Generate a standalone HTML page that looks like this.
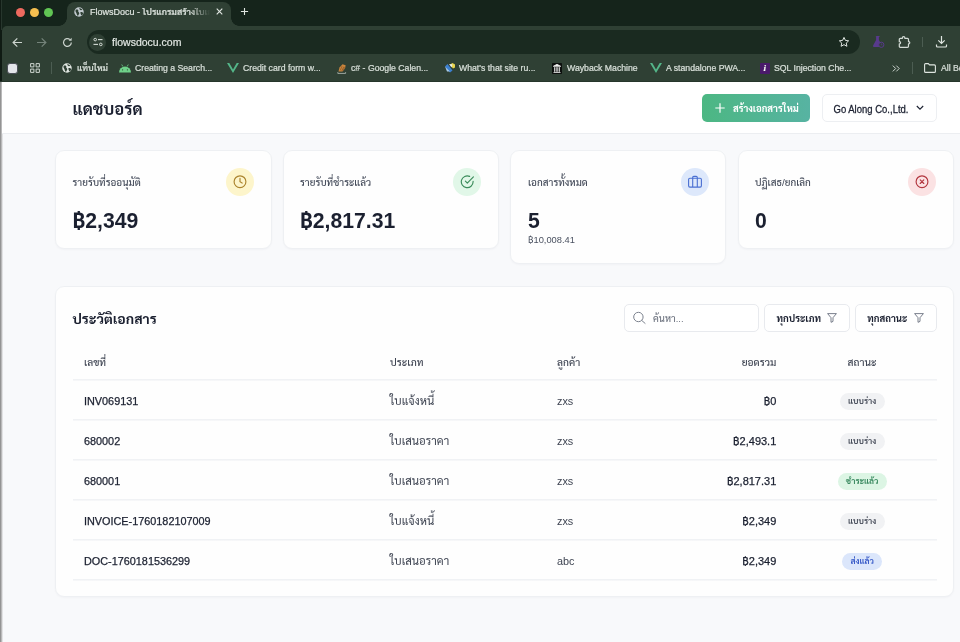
<!DOCTYPE html>
<html lang="th">
<head>
<meta charset="utf-8">
<title>FlowsDocu - โปรแกรมสร้างใบเสนอราคา</title>
<style>
*{box-sizing:border-box;margin:0;padding:0}
html,body{width:960px;height:642px;overflow:hidden;background:#f8f9fb}
body{position:relative;font-family:"Liberation Sans","Sarabun","Noto Sans Thai","Loma",sans-serif;color:#1f2430;-webkit-font-smoothing:antialiased}
#root{position:absolute;left:0;top:0;width:960px;height:642px;will-change:transform}
.abs{position:absolute}
.t{position:absolute;white-space:nowrap;line-height:1}
/* ---------- browser chrome ---------- */
#chrome{position:absolute;left:0;top:0;width:960px;height:82px;background:#0f1a13;overflow:hidden}
#toolbar{position:absolute;left:1.6px;top:26px;width:959px;height:56px;background:#2f4034;border-top-left-radius:5px}
#tabstrip{position:absolute;left:0;top:0;width:960px;height:30px;background:linear-gradient(90deg,#101b14 0,#101b14 .9px,#27362d 1px,#27362d 1.7px,#15241b 2.2px)}
#tab{position:absolute;left:67px;top:2px;width:164px;height:24px;background:#2f4034;border-radius:8px 8px 0 0}
#omni{position:absolute;left:87px;top:30px;width:773px;height:24px;background:#1a2a20;border-radius:12px}
.ct{position:absolute;white-space:nowrap;line-height:1;color:#d9e0da;font-size:8.7px;font-weight:500;-webkit-text-stroke:.2px #d9e0da}
#edgeL1{position:absolute;left:0;top:0;width:0;height:0}
#edgeL2{position:absolute;left:0;top:82px;width:3px;height:560px;background:linear-gradient(90deg,#858585 0,#a3a3a3 1px,#cfcfd0 2px,#f4f5f7 3px)}
/* ---------- page ---------- */
#hdr{position:absolute;left:2px;top:82px;width:958px;height:52px;background:#fff;border-bottom:1px solid #eceef1}
.card{position:absolute;background:#fefefe;border:1px solid #eef0f3;border-radius:9px;box-shadow:0 1px 2px rgba(20,30,50,.03)}
.lbl{font-size:9.9px;color:#434a59;font-weight:500}
.num{font-size:21.2px;font-weight:700;color:#1b2030}
.ic{position:absolute;width:28px;height:28px;border-radius:50%}
.hl{position:absolute;left:72.8px;width:864.2px;height:2px;background:linear-gradient(to bottom,rgba(235,237,241,.72) 50%,rgba(235,237,241,.42) 50%)}
.th{font-size:10.2px;color:#3e4452;line-height:14px;font-weight:500}
.id{font-size:10.85px;color:#1b2030;line-height:14px;-webkit-text-stroke:.25px #1b2030}
.cell{font-size:11.4px;color:#3e4452;line-height:16px}
.cell2{font-size:10.85px;color:#3e4452;line-height:14px}
.amt{font-size:11px;color:#1b2030;text-align:right;line-height:14px;-webkit-text-stroke:.25px #1b2030}
.pill{position:absolute;height:17px;border-radius:8.5px;font-size:8.4px;font-weight:600;line-height:17px;text-align:center;white-space:nowrap}
.draft{background:#f1f2f4;color:#3e4452}
.paid{background:#dcf5e4;color:#2f8257}
.sent{background:#dbe6fb;color:#2c50c4}
.btn{position:absolute;background:#fff;border:1px solid #e8eaee;border-radius:5px}
</style>
</head>
<body>
<div id="root">
<!-- ================= BROWSER CHROME ================= -->
<div id="chrome">
  <div id="tabstrip"></div>
  <div id="toolbar"></div>
  <!-- traffic lights -->
  <div class="abs" style="left:16px;top:8px;width:9px;height:9px;border-radius:50%;background:#ee6a5f"></div>
  <div class="abs" style="left:30px;top:8px;width:9px;height:9px;border-radius:50%;background:#f5bf4f"></div>
  <div class="abs" style="left:44px;top:8px;width:9px;height:9px;border-radius:50%;background:#61c554"></div>
  <!-- active tab -->
  <div id="tab"></div>
  <div class="abs" style="left:59px;top:18px;width:8px;height:8px;background:radial-gradient(circle at 0 0,transparent 7.5px,#2f4034 8px)"></div>
  <div class="abs" style="left:231px;top:18px;width:8px;height:8px;background:radial-gradient(circle at 100% 0,transparent 7.5px,#2f4034 8px)"></div>
  <svg class="abs" style="left:73.5px;top:7px" width="10" height="10" viewBox="0 0 20 20"><circle cx="10" cy="10" r="9.5" fill="#c3cbd0"/><path d="M3.5 5.5C6.5 4 9.5 5.5 8.5 8 7.5 10 10.5 10 10.5 12.5 10.5 14.5 8.5 15.5 8 18 5.5 16.5 5.5 13 4.5 11.5 3 9.5 2.5 7.5 3.5 5.5Z" fill="#2f4034"/><path d="M11.5 1.5C12.5 3.5 15 3.5 16.5 5 15 7 12.5 6.5 11.5 5 10.5 3.5 10.5 2.5 11.5 1.5Z" fill="#2f4034"/><path d="M13 10C15 9.5 17.5 10.5 18.8 12 18 14.5 16 16.5 14 17 14.5 14.5 12 12.5 13 10Z" fill="#2f4034"/></svg>
  <div class="ct" style="left:90px;top:7.5px;width:120px;overflow:hidden;font-size:9px;color:#e3e8e4;-webkit-mask-image:linear-gradient(90deg,#000 100px,transparent 120px);mask-image:linear-gradient(90deg,#000 100px,transparent 120px)">FlowsDocu - โปรแกรมสร้างใบเสนอราคา</div>
  <svg class="abs" style="left:215.7px;top:8.3px" width="7" height="7" viewBox="0 0 7 7"><path d="M.7.7l5.6 5.6M6.3.7L.7 6.3" stroke="#e3e8e4" stroke-width="1.1" fill="none"/></svg>
  <svg class="abs" style="left:240px;top:7.3px" width="9" height="9" viewBox="0 0 9 9"><path d="M4.5.9v7.2M.9 4.5h7.2" stroke="#dfe5e0" stroke-width="1.1" fill="none"/></svg>
  <!-- toolbar -->
  <svg class="abs" style="left:11.5px;top:36.5px" width="11" height="11" viewBox="0 0 11 11"><path d="M10 5.5H1.3M5.3 1.3L1.1 5.5l4.2 4.2" stroke="#cdd5cf" stroke-width="1.2" fill="none"/></svg>
  <svg class="abs" style="left:36px;top:36.5px" width="11" height="11" viewBox="0 0 11 11"><path d="M1 5.5h8.7M5.7 1.3l4.2 4.2-4.2 4.2" stroke="#74837a" stroke-width="1.2" fill="none"/></svg>
  <svg class="abs" style="left:62px;top:36.5px" width="11" height="11" viewBox="0 0 11 11"><path d="M9.3 5.5a3.9 3.9 0 1 1-1.3-2.9" stroke="#cdd5cf" stroke-width="1.2" fill="none"/><path d="M9.6.8v3h-3z" fill="#cdd5cf"/></svg>
  <div id="omni"></div>
  <div class="abs" style="left:89px;top:33.5px;width:17px;height:17px;border-radius:50%;background:#2f4034"></div>
  <svg class="abs" style="left:92.5px;top:37px" width="10" height="10" viewBox="0 0 10 10"><circle cx="2.2" cy="2.6" r="1.3" stroke="#d5ddd6" stroke-width="1" fill="none"/><path d="M5 2.6h4.5" stroke="#d5ddd6" stroke-width="1.1"/><circle cx="7.8" cy="7.4" r="1.3" stroke="#d5ddd6" stroke-width="1" fill="none"/><path d="M.5 7.4H5" stroke="#d5ddd6" stroke-width="1.1"/></svg>
  <div class="ct" style="left:112px;top:36.5px;font-size:10.5px;color:#e6ebe7">flowsdocu.com</div>
  <svg class="abs" style="left:837.5px;top:36px" width="12" height="12" viewBox="0 0 24 24"><path d="M12 2.8l2.8 6 6.5.8-4.8 4.5 1.3 6.5-5.8-3.3-5.8 3.3 1.3-6.5L2.7 9.6l6.5-.8z" stroke="#dfe5e0" stroke-width="2" fill="none" stroke-linejoin="round"/></svg>
  <svg class="abs" style="left:871px;top:35px" width="14" height="14" viewBox="0 0 14 14"><path d="M5.5 1h3v1h-.6v3l3 5.5q.5 1.5-1 1.5H3.1q-1.5 0-1-1.5l3-5.5V2h-.6z" fill="#583a8c"/><circle cx="10.3" cy="9.8" r="2.6" fill="#2f4034" stroke="#583a8c" stroke-width="1"/><path d="M10.3 8.3v1.6h1.2" stroke="#583a8c" stroke-width=".7" fill="none"/></svg>
  <svg class="abs" style="left:898px;top:35.5px" width="13" height="13" viewBox="0 0 13 13"><path d="M2.3 2.4H4.3V2A1.3 1.3 0 0 1 6.9 2V2.4H9.5Q10.5 2.4 10.5 3.4V5.7H10.7A1.1 1.1 0 0 1 10.7 7.9H10.5V10.3Q10.5 11.3 9.5 11.3H2.3Q1.3 11.3 1.3 10.3V7.9H1.5A1.1 1.1 0 0 0 1.5 5.7H1.3V3.4Q1.3 2.4 2.3 2.4Z" stroke="#d3dbd5" stroke-width="1.2" fill="none" stroke-linejoin="round"/></svg>
  <div class="abs" style="left:922px;top:37px;width:1px;height:10px;background:#4c5d52"></div>
  <svg class="abs" style="left:935.2px;top:34.9px" width="13" height="13" viewBox="0 0 13 13"><path d="M6.5 1v7.3M3.3 5.3l3.2 3.2 3.2-3.2M1.5 9.5v1.5q0 1 1 1h8q1 0 1-1V9.5" stroke="#dfe5e0" stroke-width="1.2" fill="none"/></svg>
  <!-- bookmarks bar -->
  <div class="abs" style="left:7px;top:62.5px;width:11px;height:11px;border-radius:3px;background:#e4e6ea;border:1px solid #4b4f57"></div>
  <svg class="abs" style="left:30px;top:63px" width="10" height="10" viewBox="0 0 10 10"><path d="M.6.6h3.3v3.3H.6zM6.1.6h3.3v3.3H6.1zM.6 6.1h3.3v3.3H.6zM6.1 6.1h3.3v3.3H6.1z" stroke="#cdd5cf" stroke-width="1" fill="none"/></svg>
  <div class="abs" style="left:51px;top:62px;width:1px;height:12px;background:#4c5d52"></div>
  <svg class="abs" style="left:62px;top:63px" width="10" height="10" viewBox="0 0 20 20"><circle cx="10" cy="10" r="9.5" fill="#dfe5e0"/><path d="M3.5 5.5C6.5 4 9.5 5.5 8.5 8 7.5 10 10.5 10 10.5 12.5 10.5 14.5 8.5 15.5 8 18 5.5 16.5 5.5 13 4.5 11.5 3 9.5 2.5 7.5 3.5 5.5Z" fill="#2f4034"/><path d="M11.5 1.5C12.5 3.5 15 3.5 16.5 5 15 7 12.5 6.5 11.5 5 10.5 3.5 10.5 2.5 11.5 1.5Z" fill="#2f4034"/><path d="M13 10C15 9.5 17.5 10.5 18.8 12 18 14.5 16 16.5 14 17 14.5 14.5 12 12.5 13 10Z" fill="#2f4034"/></svg>
  <div class="ct" style="left:77px;top:63.5px">แท็บใหม่</div>
  <svg class="abs" style="left:119px;top:63.5px" width="12" height="9" viewBox="0 0 12 9"><path d="M0 8.5a6 6 0 0 1 12 0z" fill="#6fd28a"/><path d="M2.7.5l1.2 2M9.3.5l-1.2 2" stroke="#6fd28a" stroke-width=".8"/><circle cx="3.6" cy="5.8" r=".6" fill="#2f4034"/><circle cx="8.4" cy="5.8" r=".6" fill="#2f4034"/></svg>
  <div class="ct" style="left:135px;top:63.5px">Creating a Search...</div>
  <svg class="abs" style="left:227px;top:63px" width="12" height="10" viewBox="0 0 12 10"><path d="M0 0h2.3L6 6.4 9.7 0H12L6 10z" fill="#54b689"/></svg>
  <div class="ct" style="left:243px;top:63.5px">Credit card form w...</div>
  <svg class="abs" style="left:337px;top:62.5px" width="10" height="11" viewBox="0 0 10 11"><path d="M1.5 8.5L2.5 4.5 5.5 1.2 8.6 2.2 8.2 5 5.5 8.5z" fill="#c9853d"/><path d="M3.2 7.5L5 3.2M4.8 8l2-4.3M6.3 7.5l1.3-3.3" stroke="#8a5422" stroke-width=".7" fill="none"/><path d="M.8 9.2v1.2h7.8V9.2" stroke="#b9c2bb" stroke-width=".8" fill="none"/></svg>
  <div class="ct" style="left:351px;top:63.5px">c# - Google Calen...</div>
  <svg class="abs" style="left:445px;top:63px" width="10" height="10" viewBox="0 0 10 10"><path d="M0 3.5L2.5 1l5 6.5L5 9.5z" fill="#3b7fd0"/><path d="M0 3.5l2 5h3z" fill="#a9cbe8"/><path d="M5 1.5L7.5 0 10 1.5v3L8 5.5z" fill="#e8d44d"/><path d="M4 1l2.5 3.5 1-3z" fill="#e9eef0"/></svg>
  <div class="ct" style="left:459px;top:63.5px">What's that site ru...</div>
  <svg class="abs" style="left:552px;top:62.5px" width="10" height="11" viewBox="0 0 10 11"><rect width="10" height="11" rx=".8" fill="#0c0f0d"/><path d="M1.3 3.3L5 1.3l3.7 2zM1.5 9.5h7" stroke="#f1f1f1" stroke-width=".8" fill="#f1f1f1"/><path d="M2.6 4.2v4.6M4.2 4.2v4.6M5.8 4.2v4.6M7.4 4.2v4.6" stroke="#f1f1f1" stroke-width=".9"/></svg>
  <div class="ct" style="left:567px;top:63.5px">Wayback Machine</div>
  <svg class="abs" style="left:650px;top:63px" width="12" height="10" viewBox="0 0 12 10"><path d="M0 0h2.3L6 6.4 9.7 0H12L6 10z" fill="#54b689"/></svg>
  <div class="ct" style="left:666px;top:63.5px">A standalone PWA...</div>
  <div class="abs" style="left:760px;top:62.5px;width:10px;height:11px;background:#4a1a6b;border-radius:1px"></div>
  <div class="ct" style="left:763.5px;top:63.5px;font-size:9px;font-weight:700;color:#fff;font-family:'Liberation Serif',serif;font-style:italic">i</div>
  <div class="ct" style="left:774px;top:63.5px">SQL Injection Che...</div>
  <svg class="abs" style="left:892px;top:64.5px" width="8" height="7" viewBox="0 0 8 7"><path d="M.8.6L3.7 3.5.8 6.4M4.3.6l2.9 2.9-2.9 2.9" stroke="#cdd5cf" stroke-width="1" fill="none"/></svg>
  <div class="abs" style="left:912px;top:62px;width:1px;height:12px;background:#4c5d52"></div>
  <svg class="abs" style="left:923.5px;top:63px" width="12" height="10" viewBox="0 0 12 10"><path d="M.6 1.6q0-1 1-1h2.7l1.2 1.3h4.9q1 0 1 1v5.5q0 1-1 1H1.6q-1 0-1-1z" stroke="#dfe5e0" stroke-width="1.1" fill="none"/></svg>
  <div class="ct" style="left:941px;top:63.5px">All Bookmarks</div>
  <div class="abs" style="left:0;top:81px;width:960px;height:1px;background:#26362b"></div>
</div>
<div class="abs" style="left:3px;top:82px;width:957px;height:1px;background:rgba(38,54,43,.3)"></div>
<div id="edgeL1"></div>
<div id="edgeL2"></div>

<!-- ================= PAGE ================= -->
<div id="hdr"></div>
<div class="t" style="left:72.5px;top:98.2px;font-size:16.5px;font-weight:700;color:#1b2030;line-height:22px">แดชบอร์ด</div>
<!-- create button -->
<div class="abs" style="left:701.8px;top:94px;width:108.6px;height:28px;border-radius:5px;background:linear-gradient(90deg,#4cb783,#57b3a2)"></div>
<svg class="abs" style="left:715px;top:103px" width="10" height="10" viewBox="0 0 10 10"><path d="M5 .3v9.4M.3 5h9.4" stroke="#fff" stroke-width="1.2" fill="none"/></svg>
<div class="t" style="left:733px;top:102.1px;font-size:9.5px;font-weight:700;color:#fff;line-height:14px">สร้างเอกสารใหม่</div>
<!-- company select -->
<div class="btn" style="left:821.6px;top:94px;width:115.4px;height:28px;border-color:#edeff2"></div>
<div class="t" style="left:833.5px;top:102.8px;font-size:9.5px;color:#1b2030;line-height:14px;transform:scaleY(1.08);-webkit-text-stroke:.25px #1b2030">Go Along Co.,Ltd.</div>
<svg class="abs" style="left:916px;top:105px" width="8" height="6" viewBox="0 0 8 6"><path d="M.8 1l3.2 3.2L7.2 1" stroke="#1b2030" stroke-width="1.1" fill="none"/></svg>

<!-- ================= STAT CARDS ================= -->
<div class="card" style="left:55.3px;top:150.3px;width:216.4px;height:99.2px"></div>
<div class="card" style="left:282.7px;top:150.3px;width:216.4px;height:99.2px"></div>
<div class="card" style="left:510.1px;top:150.3px;width:216.4px;height:113.8px"></div>
<div class="card" style="left:737.5px;top:150.3px;width:216.4px;height:99.2px"></div>

<div class="t lbl" style="left:72.5px;top:176.1px;line-height:14px">รายรับที่รออนุมัติ</div>
<div class="t lbl" style="left:300px;top:176.1px;line-height:14px">รายรับที่ชำระแล้ว</div>
<div class="t lbl" style="left:528px;top:176.1px;line-height:14px">เอกสารทั้งหมด</div>
<div class="t lbl" style="left:755px;top:176.1px;line-height:14px">ปฏิเสธ/ยกเลิก</div>

<div class="t num" style="left:72.5px;top:207.4px;line-height:28px">฿2,349</div>
<div class="t num" style="left:300px;top:207.4px;line-height:28px">฿2,817.31</div>
<div class="t num" style="left:528px;top:207.4px;line-height:28px">5</div>
<div class="t num" style="left:755px;top:207.4px;line-height:28px">0</div>
<div class="t" style="left:528px;top:234px;font-size:9.3px;color:#4a5160;line-height:12px">฿10,008.41</div>

<div class="ic" style="left:226px;top:168px;background:#fdf5cb"></div>
<div class="ic" style="left:453.3px;top:168px;background:#e1f7e8"></div>
<div class="ic" style="left:681px;top:168px;background:#dde8fb"></div>
<div class="ic" style="left:908.4px;top:168px;background:#fbe2e3"></div>

<!-- ================= HISTORY TABLE ================= -->
<div class="card" style="left:55.3px;top:286.3px;width:898.6px;height:311.2px"></div>
<div class="t" style="left:72.5px;top:309px;font-size:14px;font-weight:700;color:#1b2030;line-height:20px">ประวัติเอกสาร</div>
<div class="btn" style="left:624.3px;top:303.6px;width:134.4px;height:28px"></div>
<div class="t" style="left:653px;top:311.9px;font-size:9.5px;color:#6e7480;line-height:14px;font-weight:500">ค้นหา...</div>
<div class="btn" style="left:764.1px;top:303.6px;width:85.5px;height:28px"></div>
<div class="t" style="left:776.5px;top:311.6px;font-size:9.65px;font-weight:700;color:#1b2030;line-height:14px">ทุกประเภท</div>
<div class="btn" style="left:855.4px;top:303.6px;width:81.2px;height:28px"></div>
<div class="t" style="left:867.3px;top:311.6px;font-size:9.55px;font-weight:700;color:#1b2030;line-height:14px">ทุกสถานะ</div>

<!-- stat icons -->
<svg class="abs" style="left:233px;top:175px" width="14" height="14" viewBox="0 0 14 14"><circle cx="7" cy="6.7" r="5.9" stroke="#ab842e" stroke-width="1.15" fill="none"/><path d="M7 3.4v3.4l2.1 1.3" stroke="#ab842e" stroke-width="1.15" fill="none" stroke-linecap="round"/></svg>
<svg class="abs" style="left:460px;top:175px" width="15" height="14" viewBox="0 0 15 14"><path d="M13.1 6.2v.6a5.9 5.9 0 1 1-3.5-5.4" stroke="#3b8c5b" stroke-width="1.15" fill="none" stroke-linecap="round"/><path d="M13.4 1.9L7.3 8.1 5.4 6.2" stroke="#3b8c5b" stroke-width="1.15" fill="none" stroke-linecap="round" stroke-linejoin="round"/></svg>
<svg class="abs" style="left:688px;top:175px" width="14" height="14" viewBox="0 0 14 14"><rect x=".6" y="3.3" width="12.8" height="8.8" rx="1.3" stroke="#4a6fd2" stroke-width="1.1" fill="none"/><path d="M4.7 12.1V2.5q0-1.1 1.1-1.1h2.4q1.1 0 1.1 1.1v9.6" stroke="#4a6fd2" stroke-width="1.1" fill="none"/></svg>
<svg class="abs" style="left:915.4px;top:175px" width="14" height="14" viewBox="0 0 14 14"><circle cx="7" cy="6.7" r="5.9" stroke="#b2363f" stroke-width="1.15" fill="none"/><path d="M5.2 4.9l3.6 3.6M8.8 4.9L5.2 8.5" stroke="#b2363f" stroke-width="1.15" fill="none" stroke-linecap="round"/></svg>
<!-- search + filter icons -->
<svg class="abs" style="left:632px;top:311px" width="15" height="14" viewBox="0 0 15 14"><circle cx="6.4" cy="6" r="4.7" stroke="#7b818d" stroke-width="1" fill="none"/><path d="M9.8 9.5l3.3 2.9" stroke="#7b818d" stroke-width="1" fill="none" stroke-linecap="round"/></svg>
<svg class="abs" style="left:827px;top:313px" width="10" height="10" viewBox="0 0 10 10"><path d="M.6.6h8.8L6 4.7v3.7L4 9.3V4.7z" stroke="#6b7280" stroke-width=".9" fill="none" stroke-linejoin="round"/></svg>
<svg class="abs" style="left:914px;top:313px" width="10" height="10" viewBox="0 0 10 10"><path d="M.6.6h8.8L6 4.7v3.7L4 9.3V4.7z" stroke="#6b7280" stroke-width=".9" fill="none" stroke-linejoin="round"/></svg>
<div class="hl" style="top:379px"></div>
<div class="hl" style="top:419px"></div>
<div class="hl" style="top:459px"></div>
<div class="hl" style="top:499px"></div>
<div class="hl" style="top:539px"></div>
<div class="hl" style="top:579px"></div>

<!-- table header -->
<div class="t th" style="left:84px;top:356px">เลขที่</div>
<div class="t th" style="left:390px;top:356px">ประเภท</div>
<div class="t th" style="left:557px;top:356px">ลูกค้า</div>
<div class="t th" style="left:676.3px;top:356px;width:100px;text-align:right">ยอดรวม</div>
<div class="t th" style="left:812px;top:356px;width:100px;text-align:center">สถานะ</div>
<!-- table rows -->
<div class="t id" style="left:84px;top:393.6px">INV069131</div>
<div class="t cell" style="left:390px;top:392.6px">ใบแจ้งหนี้</div>
<div class="t cell2" style="left:557px;top:393.6px">zxs</div>
<div class="t amt" style="left:656.3px;top:393.6px;width:120px">฿0</div>
<div class="pill draft" style="left:839.7px;top:392.8px;width:45px">แบบร่าง</div>
<div class="t id" style="left:84px;top:433.6px">680002</div>
<div class="t cell" style="left:390px;top:432.6px">ใบเสนอราคา</div>
<div class="t cell2" style="left:557px;top:433.6px">zxs</div>
<div class="t amt" style="left:656.3px;top:433.6px;width:120px">฿2,493.1</div>
<div class="pill draft" style="left:839.7px;top:432.8px;width:45px">แบบร่าง</div>
<div class="t id" style="left:84px;top:473.6px">680001</div>
<div class="t cell" style="left:390px;top:472.6px">ใบเสนอราคา</div>
<div class="t cell2" style="left:557px;top:473.6px">zxs</div>
<div class="t amt" style="left:656.3px;top:473.6px;width:120px">฿2,817.31</div>
<div class="pill paid" style="left:837.6px;top:472.8px;width:49.2px">ชำระแล้ว</div>
<div class="t id" style="left:84px;top:513.6px">INVOICE-1760182107009</div>
<div class="t cell" style="left:390px;top:512.6px">ใบแจ้งหนี้</div>
<div class="t cell2" style="left:557px;top:513.6px">zxs</div>
<div class="t amt" style="left:656.3px;top:513.6px;width:120px">฿2,349</div>
<div class="pill draft" style="left:839.7px;top:512.8px;width:45px">แบบร่าง</div>
<div class="t id" style="left:84px;top:553.6px">DOC-1760181536299</div>
<div class="t cell" style="left:390px;top:552.6px">ใบเสนอราคา</div>
<div class="t cell2" style="left:557px;top:553.6px">abc</div>
<div class="t amt" style="left:656.3px;top:553.6px;width:120px">฿2,349</div>
<div class="pill sent" style="left:842px;top:552.8px;width:40.3px">ส่งแล้ว</div>
</div>
</body>
</html>
